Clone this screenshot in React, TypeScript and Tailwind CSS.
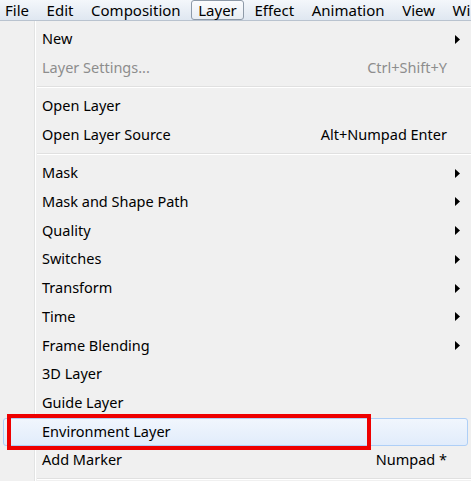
import type { ReactNode } from 'react';

type Item =
  | { kind: 'sep' }
  | { kind: 'item'; label: string; shortcut?: string; sub?: boolean; disabled?: boolean; active?: boolean };

const menuBar = ['File', 'Edit', 'Composition', 'Layer', 'Effect', 'Animation', 'View', 'Window'];

const items: Item[] = [
  { kind: 'item', label: 'New', sub: true },
  { kind: 'item', label: 'Layer Settings...', shortcut: 'Ctrl+Shift+Y', disabled: true },
  { kind: 'sep' },
  { kind: 'item', label: 'Open Layer' },
  { kind: 'item', label: 'Open Layer Source', shortcut: 'Alt+Numpad Enter' },
  { kind: 'sep' },
  { kind: 'item', label: 'Mask', sub: true },
  { kind: 'item', label: 'Mask and Shape Path', sub: true },
  { kind: 'item', label: 'Quality', sub: true },
  { kind: 'item', label: 'Switches', sub: true },
  { kind: 'item', label: 'Transform', sub: true },
  { kind: 'item', label: 'Time', sub: true },
  { kind: 'item', label: 'Frame Blending', sub: true },
  { kind: 'item', label: '3D Layer' },
  { kind: 'item', label: 'Guide Layer' },
  { kind: 'item', label: 'Environment Layer', active: true },
  { kind: 'item', label: 'Add Marker', shortcut: 'Numpad *' },
  { kind: 'sep' }
];

function SubArrow() {
  return (
    <svg width="5" height="9" viewBox="0 0 5 9" className="shrink-0">
      <path d="M0 0 L5 4.5 L0 9 Z" fill="#000" />
    </svg>
  );
}

function Row({ children, active }: { children: ReactNode; active?: boolean }) {
  return (
    <div className="relative flex h-[28.7px] items-center">
      {active && (
        <>
          <div className="absolute left-[3px] right-[3px] top-[1px] bottom-[0px] rounded-[3px] border border-[#aecff7] bg-gradient-to-b from-[#f1f6fd] to-[#e1ecfb]" />
          <div className="absolute left-[7px] top-[-3px] h-[36px] w-[364px] border-[4px] border-[#ee0000]" />
        </>
      )}
      {children}
    </div>
  );
}

export default function App() {
  return (
    <div className="h-[481px] w-[471px] overflow-hidden bg-[#f0f0f0] text-[14.5px] text-black" style={{ fontFamily: '"Noto Sans", "Open Sans", sans-serif' }}>
      <div className="flex h-[21px] items-center gap-[17.6px] overflow-hidden whitespace-nowrap border-b border-[#b9c3cf] bg-gradient-to-b from-[#f4f7fb] to-[#dfe7f1] pl-[5px] text-[15px] leading-none">
        {menuBar.map(name =>
          name === 'Layer' ? (
            <span
              key={name}
              className="-mx-[7px] flex h-[20px] items-center rounded-[3px] border border-[#8e9aa8] bg-gradient-to-b from-[#fbfcfe] to-[#e8edf3] px-[6px]"
            >
              {name}
            </span>
          ) : (
            <span key={name}>{name}</span>
          )
        )}
      </div>

      <div className="relative pt-[4px]">
        <div className="absolute bottom-0 left-[34px] top-0 w-[2px] border-l border-[#e2e3e3] bg-white" />
        {items.map((it, i) =>
          it.kind === 'sep' ? (
            <div key={i} className="relative flex h-[9.6px] items-center pl-[37px]">
              <div className="h-[2px] w-full border-t border-[#e0e0e0] bg-white" />
            </div>
          ) : (
            <Row key={i} active={it.active}>
              <span className={`relative pl-[42px] ${it.disabled ? 'text-[#8d8d8d]' : ''}`}>{it.label}</span>
              <span className="flex-1" />
              {it.shortcut && (
                <span className={`relative mr-[24px] ${it.disabled ? 'text-[#8d8d8d]' : ''}`}>{it.shortcut}</span>
              )}
              {it.sub && (
                <span className="relative mr-[11px] flex">
                  <SubArrow />
                </span>
              )}
            </Row>
          )
        )}
      </div>
    </div>
  );
}
